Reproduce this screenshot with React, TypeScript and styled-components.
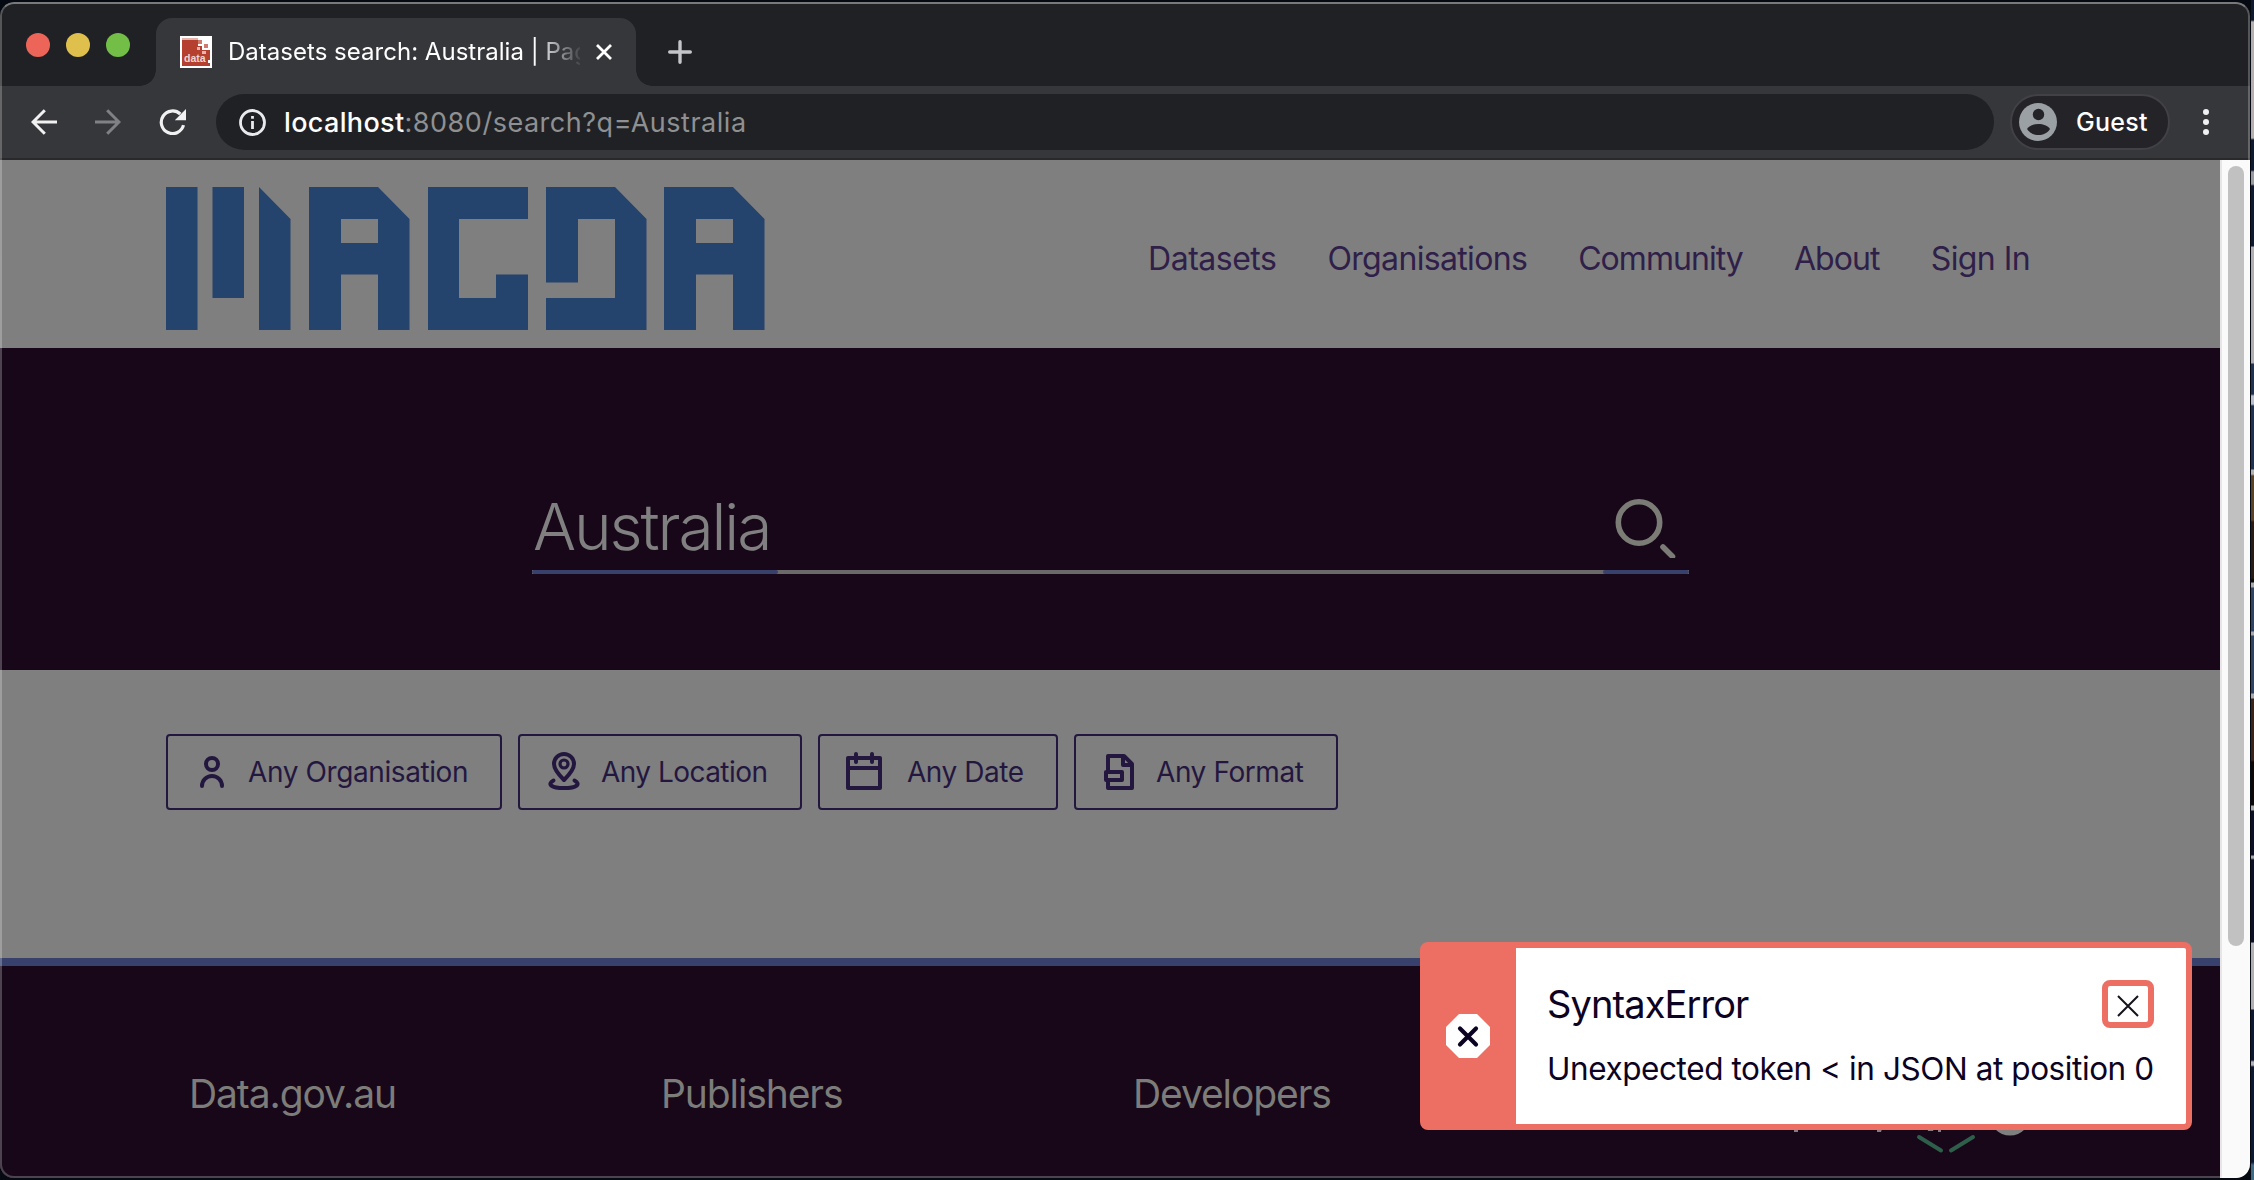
import React from 'react';
import styled, { createGlobalStyle } from 'styled-components';

const color = {
  frame: '#202124',
  toolbar: '#36373b',
  page: '#7f7f7f',
  night: '#170719',
  violet: '#2f2049',
  ink: '#24173f',
  blue: '#37416b',
  logo: '#24436d',
  error: '#ed6f63',
  pale: '#7c7c79',
};

const GlobalStyle = createGlobalStyle`
  * { box-sizing: border-box; }
  body { margin: 0; background: #0b1322; font-family: Inter, "Liberation Sans", sans-serif; }
  button { font: inherit; }
  svg { display: block; flex: none; }
`;

const Desktop = styled.div`
  width: 2254px;
  height: 1180px;
  padding-top: 2px;
  overflow: hidden;
  background:
    linear-gradient(180deg,
      #0d1a30 0 20px, #b5b0ae 22px 138px, #0d1a30 140px 170px, #9a9a9c 172px 184px, #0d1a30 186px 246px,
      #b0aeae 247px 363px, #1f3350 364px 394px, #b8bec8 396px 404px, #1f3350 406px 469px, #b0b0b0 470px 474px,
      #5a4226 476px 520px, #2a1a14 522px 578px, #0a0a0a 580px 582px, #a8a8a8 583px 587px, #2e4462 588px 631px,
      #a8a8a8 632px 635px, #2e4462 636px 693px, #a8a8a8 694px 698px, #3a2418 699px 760px, #0c0808 762px 805px,
      #a8a8a8 806px 810px, #0b1024 811px 855px, #a8a8a8 856px 858px, #0b1024 860px 942px, #b0b0b0 943px 1009px,
      #0c1730 1010px 1060px, #b0b0b0 1062px 1065px, #0c1730 1067px 1162px, #3f6a86 1165px 1180px)
      right top / 3px 1180px no-repeat,
    #050912;
`;

const Window = styled.div`
  position: relative;
  display: flex;
  flex-direction: column;
  width: 2250px;
  height: 1176px;
  overflow: hidden;
  border-radius: 14px;
  background: ${color.frame};

  &::after {
    content: '';
    position: absolute;
    inset: 0;
    border: 2px solid rgba(255, 255, 255, 0.24);
    border-top-color: rgba(255, 255, 255, 0.4);
    border-radius: 14px;
    pointer-events: none;
  }
`;

const TitleBar = styled.div`
  display: flex;
  flex: none;
  align-items: flex-end;
  height: 84px;
  padding-left: 26px;
`;

const Lights = styled.div`
  display: flex;
  gap: 16px;
  width: 130px;
  padding-bottom: 29px;
`;

const Light = styled.span<{ $fill: string }>`
  width: 24px;
  height: 24px;
  border-radius: 50%;
  background: ${(p) => p.$fill};
`;

const Tab = styled.div`
  position: relative;
  display: flex;
  align-items: center;
  width: 480px;
  height: 68px;
  padding-left: 24px;
  border-radius: 16px 16px 0 0;
  background: ${color.toolbar};

  &::before,
  &::after {
    content: '';
    position: absolute;
    bottom: 0;
    width: 16px;
    height: 16px;
  }
  &::before {
    left: -16px;
    background: radial-gradient(circle at 0 0, transparent 15.5px, ${color.toolbar} 16px);
  }
  &::after {
    right: -16px;
    background: radial-gradient(circle at 100% 0, transparent 15.5px, ${color.toolbar} 16px);
  }
`;

const TabTitle = styled.div`
  width: 352px;
  margin: 0 16px 0 16px;
  overflow: hidden;
  color: #fff;
  font-size: 24px;
  line-height: 36px;
  letter-spacing: 0.02px;
  white-space: nowrap;
  mask-image: linear-gradient(90deg, #000 306px, transparent 356px);
`;

const NewTab = styled.div`
  display: flex;
  align-items: center;
  height: 68px;
  margin-left: 32px;
`;

const Toolbar = styled.div`
  display: flex;
  flex: none;
  align-items: center;
  height: 74px;
  padding-left: 31px;
  border-bottom: 2px solid #29292b;
  background: ${color.toolbar};
`;

const NavIcons = styled.div`
  display: flex;
  gap: 38px;
  width: 185px;
`;

const AddressBar = styled.div`
  display: flex;
  align-items: center;
  gap: 18px;
  width: 1778px;
  height: 56px;
  padding-left: 23px;
  border-radius: 28px;
  background: ${color.frame};
`;

const Url = styled.div`
  padding-top: 1px;
  color: #8f9092;
  font-size: 27px;
  line-height: 40px;
  letter-spacing: 0.52px;

  b {
    color: #fff;
    font-weight: 450;
    letter-spacing: 0.35px;
  }
`;

const Profile = styled.div`
  display: flex;
  align-items: center;
  gap: 19px;
  width: 160px;
  height: 56px;
  margin-left: 16px;
  padding-left: 7px;
  border: 2px solid #414146;
  border-radius: 28px;
  background: #242328;
  color: #fff;
  font-size: 25px;
  font-weight: 500;
  letter-spacing: 0.28px;
`;

const Menu = styled.div`
  display: grid;
  gap: 4px;
  margin-left: 33px;

  i {
    width: 6px;
    height: 6px;
    border-radius: 50%;
    background: #f1f1f2;
  }
`;

const Viewport = styled.div`
  display: flex;
  flex: 1;
  min-height: 0;
`;

const Page = styled.div`
  display: flex;
  flex-direction: column;
  width: 2220px;
  background: ${color.page};
`;

const Scrollbar = styled.div`
  flex: 1;
  padding: 6px 6px 0;
  border-left: 2px solid #e7e5e6;
  background: #fafafa;
`;

const Thumb = styled.div`
  width: 16px;
  height: 780px;
  border-radius: 8px;
  background: #c1c1c1;
`;

const Header = styled.header`
  display: flex;
  flex: none;
  align-items: center;
  justify-content: space-between;
  height: 188px;
  padding: 8px 190px 0 166px;
`;

const SiteNav = styled.nav`
  display: flex;
  gap: 51px;
  padding-top: 2px;
`;

const NavLink = styled.a<{ $tracking: number }>`
  color: ${color.violet};
  font-size: 32px;
  line-height: 48px;
  letter-spacing: ${(p) => p.$tracking}px;
`;

const SearchBand = styled.section`
  flex: none;
  height: 322px;
  padding: 135px 0 0 532px;
  background: ${color.night};
`;

const SearchField = styled.div`
  width: 1157px;
`;

const SearchRow = styled.div`
  display: flex;
  align-items: center;
  justify-content: space-between;
  height: 87px;
  padding: 0 13px 0 1px;
`;

const Query = styled.span`
  color: #808080;
  font-size: 64px;
  font-weight: 350;
  letter-spacing: -2.1px;
`;

const Underline = styled.div`
  display: grid;
  grid-template-columns: 246px 1fr 86px;
  height: 4px;
  background: #6b6969;

  i {
    border-radius: 2px;
    background: ${color.blue};
  }
  i:last-child {
    grid-column: 3;
  }
`;

const Filters = styled.section`
  display: flex;
  flex: none;
  gap: 16px;
  height: 288px;
  padding: 64px 0 0 166px;
`;

const FilterButton = styled.button<{ $width: number; $gap?: number; $tracking: number }>`
  display: flex;
  align-items: center;
  gap: ${(p) => p.$gap ?? 16}px;
  width: ${(p) => p.$width}px;
  height: 76px;
  padding: 0 0 0 24px;
  border: 2px solid ${color.ink};
  border-radius: 4px;
  background: transparent;
  color: ${color.ink};
  font-size: 28px;
  letter-spacing: ${(p) => p.$tracking}px;
  white-space: nowrap;
`;

const Footer = styled.footer`
  display: grid;
  flex: 1;
  grid-template-columns: repeat(3, 472px) 1fr;
  align-items: start;
  padding: 98px 0 0 189px;
  border-top: 8px solid ${color.blue};
  background: ${color.night};
`;

const FooterHeading = styled.h3<{ $tracking: number }>`
  margin: 0;
  color: ${color.pale};
  font-size: 39px;
  font-weight: 400;
  line-height: 60px;
  letter-spacing: ${(p) => p.$tracking}px;
`;

const PoweredBy = styled.div`
  padding: 62px 0 0 175px;
`;

const Toast = styled.div`
  position: absolute;
  left: 1420px;
  top: 940px;
  display: flex;
  width: 772px;
  height: 188px;
  border: 6px solid ${color.error};
  border-radius: 8px;
  background: #fff;
`;

const ToastMark = styled.div`
  display: grid;
  place-items: center;
  width: 90px;
  padding-right: 6px;
  background: ${color.error};
`;

const ToastBody = styled.div`
  display: flex;
  flex: 1;
  flex-direction: column;
  padding: 32px 32px 0 31px;
  color: #0c0222;
`;

const ToastTop = styled.div`
  display: flex;
  justify-content: space-between;
  height: 48px;
`;

const ToastTitle = styled.div`
  font-size: 38px;
  line-height: 48px;
  letter-spacing: -0.9px;
`;

const ToastText = styled.div`
  margin-top: 17px;
  font-size: 31.5px;
  line-height: 48px;
  letter-spacing: -0.42px;
  white-space: nowrap;
`;

const CloseButton = styled.button`
  display: grid;
  place-items: center;
  width: 52px;
  height: 48px;
  padding: 4px 0 0;
  border: 6px solid ${color.error};
  border-radius: 8px;
  background: #fff;
`;

const Favicon = () => (
  <svg width="32" height="32" viewBox="0 0 32 32">
    <path fill="#fff" d="M0 0h32v32H0z" />
    <path fill="#e3b5ae" d="M2 2h16v2H2z" />
    <path fill="#b5402f" d="M2 4h16v6h4v4h8v16H2z" />
    <path fill="#cf7a6d" d="M18 4h4v4h-4zM24 8h4v4h-4z" />
    <path fill="#e3b5ae" d="M22 15h4v3h-4zM17 11h3v3h-3z" />
    <text x="4" y="26" fill="#f0d5d0" fontFamily="Liberation Sans" fontSize="10.5" fontWeight="700">data</text>
    <path fill="#fff" d="M28 24h4v3h-4z" />
  </svg>
);

const Logo = () => (
  <svg width="599" height="143" viewBox="0 0 599 143" fill={color.logo} fillRule="evenodd">
    <path d="M0 0h31.5v143H0zM46.5 0H78v111H46.5zM93 0l31.5 32v111H93z" />
    <path d="M143 0h69l31.5 32v111H212V87.5h-37V143h-32zM175 32v24h37V32z" />
    <path d="M262 0h100v32h-69v79h37V87.500h32V143H262z" />
    <path d="M380 0h69l31.500 32v111H380v-32h69V32h-37v63.500h-32z" />
    <path d="M498 0h69l31.500 32v111H567V87.500h-37V143h-32zM530 32v24h37V32z" />
  </svg>
);

const Glyph = ({ children }: { children: React.ReactNode }) => (
  <svg width="40" height="40" viewBox="0 0 40 40" fill="none" stroke={color.ink} strokeWidth="4" strokeLinecap="round" strokeLinejoin="round">
    {children}
  </svg>
);

export default function App() {
  return (
    <>
      <GlobalStyle />
      <Desktop>
        <Window>
          <TitleBar>
            <Lights>
              <Light $fill="#ed6559" />
              <Light $fill="#e0c04c" />
              <Light $fill="#72be47" />
            </Lights>
            <Tab>
              <Favicon />
              <TabTitle>Datasets search: Australia | Pag</TabTitle>
              <svg width="16" height="16" viewBox="0 0 16 16" stroke="#fff" strokeWidth="2.8">
                <path d="M1 1l14 14M15 1L1 15" />
              </svg>
            </Tab>
            <NewTab>
              <svg width="24" height="24" viewBox="0 0 24 24" stroke="#c3c5c9" strokeWidth="3.4" strokeLinecap="round">
                <path d="M12 1.700v20.600M1.700 12h20.600" />
              </svg>
            </NewTab>
          </TitleBar>

          <Toolbar>
            <NavIcons>
              <svg width="26" height="26" viewBox="0 0 26 26" fill="none" stroke="#f1f1f2" strokeWidth="3">
                <path d="M26 13H2.500M13.800 1.200L2 13l11.800 11.800" />
              </svg>
              <svg width="26" height="26" viewBox="0 0 26 26" fill="none" stroke="#808184" strokeWidth="3">
                <path d="M0 13h23.500M12.200 1.200L24 13 12.200 24.800" />
              </svg>
              <svg width="27" height="26" viewBox="0 0 27 26" fill="none" stroke="#f1f1f2" strokeWidth="3.200">
                <path d="M24.500 16.200A11.300 11.300 0 1 1 21.300 5" />
                <path d="M27 0v11.200H15.800z" fill="#f1f1f2" stroke="none" />
              </svg>
            </NavIcons>
            <AddressBar>
              <svg width="27" height="27" viewBox="0 0 27 27" fill="none" stroke="#e8eaed" strokeWidth="2.800">
                <circle cx="13.500" cy="13.500" r="12" />
                <path d="M13.500 12v8M13.500 7v2.800" />
              </svg>
              <Url><b>localhost</b>:8080/search?q=Australia</Url>
            </AddressBar>
            <Profile>
              <svg width="38" height="38" viewBox="0 0 38 38">
                <circle cx="19" cy="19" r="19" fill="#9aa0a4" />
                <circle cx="19.500" cy="11.500" r="5.700" fill="#242328" />
                <path d="M8 26c2-3.500 7-5 11.500-5S29 22.500 31 26c-2.500 4-7 6-11.500 6S10.500 30 8 26z" fill="#242328" />
              </svg>
              Guest
            </Profile>
            <Menu><i /><i /><i /></Menu>
          </Toolbar>

          <Viewport>
            <Page>
              <Header>
                <Logo />
                <SiteNav>
                  <NavLink $tracking={-0.48}>Datasets</NavLink>
                  <NavLink $tracking={-0.66}>Organisations</NavLink>
                  <NavLink $tracking={-0.95}>Community</NavLink>
                  <NavLink $tracking={-0.9}>About</NavLink>
                  <NavLink $tracking={-0.57}>Sign In</NavLink>
                </SiteNav>
              </Header>

              <SearchBand>
                <SearchField>
                  <SearchRow>
                    <Query>Australia</Query>
                    <svg width="62" height="62" viewBox="0 0 62 62" fill="none" stroke="#7b7c75" strokeLinecap="round">
                      <circle cx="25" cy="26.500" r="20.700" strokeWidth="5.600" />
                      <path d="M49 51l9.500 9.500" strokeWidth="5.600" />
                    </svg>
                  </SearchRow>
                  <Underline><i /><i /></Underline>
                </SearchField>
              </SearchBand>

              <Filters>
                <FilterButton $width={336} $tracking={-0.4}>
                  <Glyph>
                    <circle cx="20" cy="12" r="6" />
                    <path d="M10 34a10 10 0 0 1 20 0" />
                  </Glyph>
                  Any Organisation
                </FilterButton>
                <FilterButton $width={284} $gap={17} $tracking={-0.54}>
                  <Glyph>
                    <path d="M20 28C14 22 10 17 10 12a10 10 0 0 1 20 0c0 5-4 10-10 16z" />
                    <circle cx="20" cy="12" r="4" strokeWidth="3.200" />
                    <path d="M9.500 28.500C3 32 7 36 20 36s17-4 10.500-7.500" />
                  </Glyph>
                  Any Location
                </FilterButton>
                <FilterButton $width={240} $gap={23} $tracking={-0.46}>
                  <Glyph>
                    <path d="M4 6h32v30H4zM4 16h32M12 2v8M28 2v8" />
                  </Glyph>
                  Any Date
                </FilterButton>
                <FilterButton $width={264} $tracking={-0.42}>
                  <Glyph>
                    <path d="M8 19V4h16l8 8v24H8v-7M23 4v9h9M6 20h16v8H6z" />
                  </Glyph>
                  Any Format
                </FilterButton>
              </Filters>

              <Footer>
                <FooterHeading $tracking={-1.1}>Data.gov.au</FooterHeading>
                <FooterHeading $tracking={-1.1}>Publishers</FooterHeading>
                <FooterHeading $tracking={-1.1}>Developers</FooterHeading>
                <PoweredBy>
                  <svg width="260" height="30" viewBox="0 0 260 30">
                    <circle cx="230" cy="-11.500" r="21" fill={color.page} />
                    <path d="M14 0h4v6h-4zM97 0h6l-2 6h-4zM147 0h8l-2 5h-5zM158 0h3v6h-3z" fill={color.page} />
                    <path d="M139 11l22 13.500M171 24.500L193 11" stroke="#2e5f4a" strokeWidth="4" strokeLinecap="round" />
                  </svg>
                </PoweredBy>
              </Footer>
            </Page>
            <Scrollbar><Thumb /></Scrollbar>
          </Viewport>

          <Toast>
            <ToastMark>
              <svg width="44" height="44" viewBox="0 0 44 44">
                <path d="M13 0h18l13 13v18L31 44H13L0 31V13z" fill="#fff" />
                <path d="M14 14.500l16 16M30 14.500l-16 16" stroke="#0c0222" strokeWidth="4.200" strokeLinecap="round" />
              </svg>
            </ToastMark>
            <ToastBody>
              <ToastTop>
                <ToastTitle>SyntaxError</ToastTitle>
                <CloseButton>
                  <svg width="22" height="22" viewBox="0 0 22 22" stroke="#15121c" strokeWidth="2">
                    <path d="M1 1l20 20M21 1L1 21" />
                  </svg>
                </CloseButton>
              </ToastTop>
              <ToastText>Unexpected token &lt; in JSON at position 0</ToastText>
            </ToastBody>
          </Toast>
        </Window>
      </Desktop>
    </>
  );
}
